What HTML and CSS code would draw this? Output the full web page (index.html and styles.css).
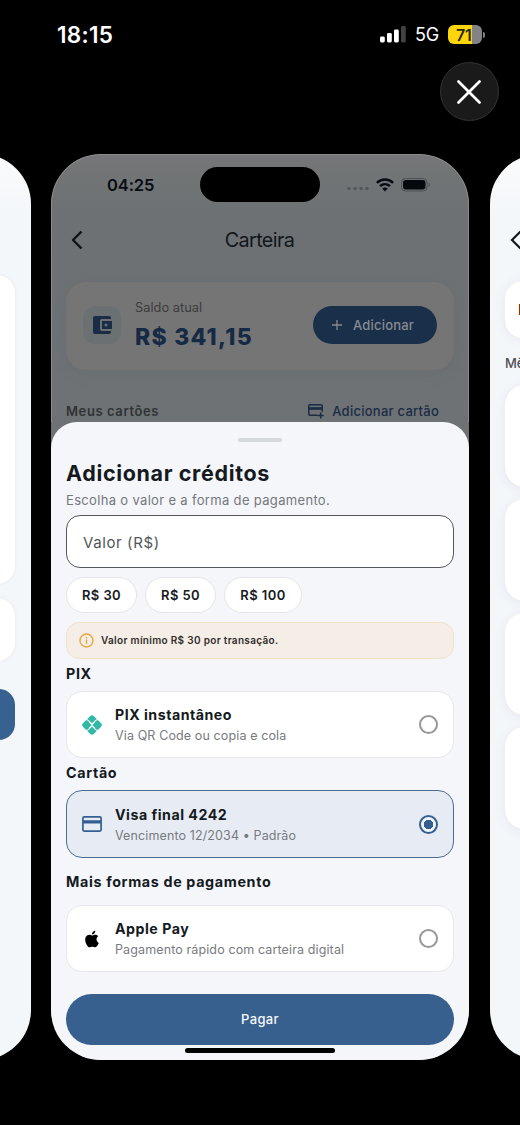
FILE: index.html
```html
<!DOCTYPE html>
<html lang="pt-BR">
<head>
<meta charset="utf-8">
<title>Carteira</title>
<link rel="stylesheet" href="styles.css">
</head>
<body>
<header class="top">
  <div class="status">
    <span class="clock">18:15</span>
    <div class="status-right">
      <svg class="signal" width="27" height="17" viewBox="0 0 27 17"><rect x="0" y="10.500" width="4.800" height="6" rx="1.400" fill="#fff"/><rect x="7" y="7" width="4.800" height="9.500" rx="1.400" fill="#fff"/><rect x="14" y="3.500" width="4.800" height="13" rx="1.400" fill="#fff"/><rect x="21" y="0" width="4.800" height="16.500" rx="1.400" fill="#424242"/></svg>
      <span class="net">5G</span>
      <div class="battery"><span class="level">71</span></div><i class="nub"></i>
    </div>
  </div>
  <div class="close-row"><div class="close"><svg width="24" height="24" viewBox="0 0 24 24" fill="none" stroke="#fff" stroke-width="2.700" stroke-linecap="round"><path d="M1.500 1.500 22.500 22.500M22.500 1.500 1.500 22.500"/></svg></div></div>
</header>
<main class="carousel">
  <section class="phone prev">
    <div class="panel tall"></div>
    <div class="panel short"></div>
    <div class="panel action"></div>
  </section>

  <section class="phone current">
    <div class="dim">
      <div class="inner-status">
        <span class="inner-clock">04:25</span>
        <span class="island"></span>
        <div class="inner-icons">
          <svg width="22" height="5" viewBox="0 0 22 5" fill="#53585a"><circle cx="2" cy="2.500" r="1.700"/><circle cx="8" cy="2.500" r="1.700"/><circle cx="14" cy="2.500" r="1.700"/><circle cx="20" cy="2.500" r="1.700"/></svg>
          <svg class="wifi" width="18" height="14" viewBox="0 0 18 14" fill="none" stroke="#070c12" stroke-width="2.500"><path d="M.9 4.800C5.500.3 12.500.3 17.100 4.800M4 8.200c2.900-2.700 7.100-2.700 10 0"/><path d="M9 13.400 6.200 10.600c1.700-1.400 3.900-1.400 5.600 0z" fill="#070c12" stroke="none"/></svg>
          <svg class="cell" width="30" height="14" viewBox="0 0 30 14"><rect x=".5" y=".5" width="25.500" height="12.500" rx="4" fill="none" stroke="#4c5154"/><rect x="2" y="2" width="22.500" height="9.500" rx="2.700" fill="#05090d"/><path d="M27.500 4.500c1.700.5 1.700 4 0 4.500z" fill="#4c5154"/></svg>
        </div>
      </div>
      <div class="nav">
        <svg width="12" height="20" viewBox="0 0 12 20" fill="none" stroke="#0d1318" stroke-width="2.400" stroke-linejoin="round"><path d="M10.500 1.500 2 10l8.500 8.500"/></svg>
        <h1 class="nav-title">Carteira</h1>
      </div>
      <div class="balance">
        <div class="wallet"><svg width="24" height="24" viewBox="0 0 24 24" fill="#1a2c46"><path d="M21 18v1c0 1.100-.9 2-2 2H5c-1.110 0-2-.9-2-2V5c0-1.100.89-2 2-2h14c1.100 0 2 .9 2 2v1h-9c-1.110 0-2 .9-2 2v8c0 1.100.89 2 2 2h9zm-9-2h10V8H12v8zm4-2.500c-.83 0-1.500-.67-1.500-1.500s.67-1.500 1.500-1.500 1.500.67 1.500 1.500-.67 1.500-1.500 1.500z"/></svg></div>
        <div class="sum"><span class="sum-label">Saldo atual</span><span class="sum-value">R$ 341,15</span></div>
        <div class="add"><svg width="10" height="10" viewBox="0 0 10 10" stroke="#858b91" stroke-width="1.300"><path d="M5 0v10M0 5h10"/></svg><span>Adicionar</span></div>
      </div>
      <div class="cards-head">
        <span class="my-cards">Meus cartões</span>
        <div class="add-card"><svg width="17" height="15" viewBox="0 0 17 15" fill="none" stroke="#1a2c46" stroke-width="1.500"><path d="M9.500 11.300H1.800a1 1 0 0 1-1-1V1.800a1 1 0 0 1 1-1h11.400a1 1 0 0 1 1 1v6M12.700 8.500v6M9.700 11.500h6"/><path d="M.8 4.500h13.400" stroke-width="2.600"/></svg><span>Adicionar cartão</span></div>
      </div>
    </div>

    <div class="sheet">
      <i class="handle"></i>
      <h2 class="title">Adicionar créditos</h2>
      <p class="caption">Escolha o valor e a forma de pagamento.</p>
      <div class="field">Valor (R$)</div>
      <div class="chips"><span class="chip">R$ 30</span><span class="chip">R$ 50</span><span class="chip wide">R$ 100</span></div>
      <div class="notice"><svg width="15" height="15" viewBox="0 0 15 15" fill="none" stroke="#e6a83c" stroke-width="1.400"><circle cx="7.500" cy="7.500" r="6.500"/><path d="M7.500 6.600v4.200M7.500 3.900v1.500"/></svg><span>Valor mínimo R$ 30 por transação.</span></div>
      <h3 class="label pix-label">PIX</h3>
      <div class="option">
        <svg class="opt-icon" width="20" height="20" viewBox="0 0 20 20" fill="#31b8a6"><path d="M5 4.200 8.300.9q1.700-1.500 3.400 0L15 4.200q-1 .1-1.700.8L10.600 7.700q-.6.600-1.200 0L6.700 5Q6 4.300 5 4.200z"/><path d="M5 15.800 8.300 19.100q1.700 1.500 3.400 0L15 15.800q-1-.1-1.700-.8l-2.700-2.700q-.6-.6-1.200 0L6.700 15q-.7.700-1.700.8z"/><path d="M3.900 5.300h1q.6 0 1 .5l2.700 2.700q1.400 1.200 2.800 0l2.700-2.700q.4-.5 1-.5h1l3 3q1.500 1.700 0 3.400l-3 3h-1q-.6 0-1-.5l-2.700-2.700q-1.400-1.200-2.800 0l-2.700 2.700q-.4.500-1 .5h-1l-3-3q-1.500-1.700 0-3.400z"/><path d="M7.200 7.200 12.800 12.800M12.800 7.200 7.200 12.800" stroke="#fff" stroke-width=".8"/></svg>
        <div class="opt-text"><strong>PIX instantâneo</strong><span>Via QR Code ou copia e cola</span></div>
        <i class="radio"></i>
      </div>
      <h3 class="label card-label">Cartão</h3>
      <div class="option selected">
        <svg class="opt-icon" width="20" height="16" viewBox="0 0 20 16" fill="none" stroke="#365f91" stroke-width="1.700"><rect x=".9" y=".9" width="18.200" height="14.200" rx="1.300"/><path d="M1 5.900h18" stroke-width="3.200"/></svg>
        <div class="opt-text"><strong>Visa final 4242</strong><span>Vencimento 12/2034 • Padrão</span></div>
        <i class="radio on"></i>
      </div>
      <h3 class="label more-label">Mais formas de pagamento</h3>
      <div class="option">
        <svg class="opt-icon" width="20" height="20" viewBox="0 0 24 24" fill="#000"><path d="M18.710 19.500c-.83 1.240-1.710 2.450-3.050 2.470-1.340.03-1.770-.79-3.290-.79-1.530 0-2 .77-3.270.82-1.310.05-2.300-1.320-3.140-2.530C4.250 17 2.940 12.450 4.700 9.390c.87-1.520 2.430-2.480 4.120-2.510 1.280-.02 2.500.87 3.290.87.780 0 2.260-1.070 3.810-.91.650.03 2.470.26 3.640 1.980-.09.06-2.170 1.280-2.150 3.810.03 3.020 2.650 4.030 2.680 4.040-.03.070-.42 1.440-1.380 2.830M13 3.500c.73-.83 1.940-1.460 2.940-1.500.13 1.170-.34 2.350-1.040 3.190-.69.850-1.830 1.510-2.950 1.420-.15-1.150.41-2.350 1.050-3.110z"/></svg>
        <div class="opt-text"><strong>Apple Pay</strong><span>Pagamento rápido com carteira digital</span></div>
        <i class="radio"></i>
      </div>
      <div class="pay">Pagar</div>
      <i class="home"></i>
    </div>
  </section>

  <section class="phone next">
    <div class="next-nav"><svg width="12" height="20" viewBox="0 0 12 20" fill="none" stroke="#15191c" stroke-width="2.200"><path d="M10.500 1.500 2 10l8.500 8.500"/></svg></div>
    <div class="filter">P</div>
    <div class="month">Mês</div>
    <div class="entries"><i></i><i></i><i></i><i></i></div>
  </section>
</main>
</body>
</html>
```
FILE: styles.css
```css
* { box-sizing: border-box; }
html { overflow: hidden; background: #000; }
body { margin: 0; width: 520px; height: 1125px; overflow: hidden; background: #000; font-family: Inter, "Liberation Sans", sans-serif; white-space: nowrap; }
h1, h2, h3, p { margin: 0; }
i, svg { display: block; flex: none; }

.top { height: 154px; }
.status { height: 62px; padding: 7px 35px 0 57px; display: flex; justify-content: space-between; align-items: center; color: #fff; }
.clock { font-size: 22.500px; font-weight: 600; letter-spacing: .3px; }
.status-right { display: flex; align-items: center; }
.net { font-size: 18px; margin-left: 8px; width: 33px; letter-spacing: -.2px; }
.battery { width: 34px; height: 19px; border-radius: 6px; background: linear-gradient(90deg, #ffd60a 24px, #838387 24px); display: flex; align-items: center; padding-left: 8px; }
.level { color: #2b2610; font-size: 16px; font-weight: 600; letter-spacing: -.2px; }
.nub { width: 2px; height: 6px; margin-left: 1px; border-radius: 0 2px 2px 0; background: #838387; }
.close-row { display: flex; justify-content: flex-end; padding: 0 21px 0 0; }
.close { width: 59px; height: 59px; border-radius: 50%; background: #1a1a1a; border: 1px solid #333; display: grid; place-items: center; padding-right: 1px; }

.carousel { display: flex; width: 1300px; margin-left: -387px; gap: 20px; }
.phone { flex: none; width: 418px; height: 906px; border-radius: 50px; overflow: hidden; background: #f4f7fa; }

.prev { padding: 121px 16px 0; background: linear-gradient(#fafbfc, #f4f7fa 60px); }
.panel { background: #fff; border-radius: 18px; box-shadow: 0 0 3px #dfe3e8; }
.tall { height: 309px; }
.short { height: 63px; margin-top: 14px; }
.action { height: 51px; margin-top: 28px; background: #376190; border-radius: 16px; box-shadow: none; }

.current { background: #6e7275; }
.dim { height: 268px; background: linear-gradient(#747677, #6d7173 60px, #6e7274); border: 1px solid #8a8c8d; border-bottom: 0; border-radius: 50px 50px 0 0; padding: 11px 14px 0; }
.inner-status { display: flex; align-items: center; height: 37px; padding-left: 41px; }
.inner-clock { width: 93px; font-size: 16.500px; font-weight: 600; color: #080d12; letter-spacing: -.1px; }
.island { width: 120px; height: 35px; border-radius: 18px; background: #000; }
.inner-icons { display: flex; align-items: center; margin-left: 27px; }
.inner-icons > svg:first-child { margin-top: 8px; }
.wifi { margin-left: 7px; }
.cell { margin-left: 7px; }
.nav { height: 42px; margin-top: 16px; display: flex; align-items: center; padding: 0 5px; }
.nav-title { flex: 1; text-align: center; padding-right: 13px; font-size: 19.800px; font-weight: 400; letter-spacing: -.6px; color: #11161b; }
.balance { height: 88px; margin-top: 21px; border-radius: 20px; background: #757575; box-shadow: 0 2px 12px #6a6d70; display: flex; align-items: center; padding: 0 17px 2px; }
.wallet { width: 38px; height: 38px; border-radius: 12px; background: #6b7173; display: grid; place-items: center; }
.sum { display: flex; flex-direction: column; margin-left: 14px; padding-top: 2px; width: 178px; }
.sum-label { font-size: 12.800px; line-height: 18px; margin-top: -1px; letter-spacing: .03px; color: #3b3c3e; }
.sum-value { font-size: 23px; line-height: 29px; margin-top: 6px; font-weight: 800; letter-spacing: 1.250px; color: #172a45; }
.add { width: 124px; height: 38px; border-radius: 19px; background: #1a2f49; color: #858b91; display: flex; align-items: center; padding-left: 19px; gap: 11px; font-size: 13px; font-weight: 500; letter-spacing: .2px; }
.cards-head { display: flex; justify-content: space-between; align-items: center; height: 20px; margin-top: 31px; padding-right: 15px; font-size: 13px; font-weight: 500; letter-spacing: .25px; color: #1a2c46; }
.my-cards { font-weight: 600; letter-spacing: .6px; color: #303336; }
.add-card { display: flex; align-items: center; gap: 7px; }

.sheet { height: 638px; background: #f4f6fa; border-radius: 26px 26px 0 0; padding: 16px 15px 0; color: #151a1e; }
.handle { width: 44px; height: 4px; border-radius: 2px; margin: 0 auto; background: #d6d9dc; }
.title { margin-top: 17px; font-size: 21.500px; line-height: 28px; font-weight: 700; letter-spacing: .65px; }
.caption { margin-top: 3px; font-size: 13px; line-height: 20px; letter-spacing: .33px; color: #74777b; }
.field { height: 53px; margin-top: 5px; border: 1px solid #53585c; border-radius: 14px; background: #fff; line-height: 53px; padding-left: 16px; font-size: 15px; letter-spacing: .6px; color: #535659; }
.chips { display: flex; gap: 8px; margin-top: 9px; }
.chip { width: 71px; height: 36px; border: 1px solid #e2e5e9; border-radius: 18px; background: #fff; text-align: center; line-height: 34px; font-size: 13px; font-weight: 600; letter-spacing: .4px; }
.wide { width: 78px; }
.notice { height: 37px; margin-top: 9px; border: 1px solid #f2e2c9; border-radius: 13px; background: #f5eee7; display: flex; align-items: center; gap: 7px; padding: 0 0 1px 12px; font-size: 10px; font-weight: 600; letter-spacing: .32px; color: #302d2b; }
.label { font-size: 14.300px; line-height: 20px; font-weight: 700; letter-spacing: .65px; }
.pix-label, .card-label { margin: 5px 0 7px; }
.more-label { margin: 14px 0 13px; }
.option { height: 67px; border: 1px solid #e6e7ec; border-radius: 16px; background: #fff; display: flex; align-items: center; padding: 0 15px; }
.selected { height: 68px; border-color: #4e6b91; background: #e7ecf4; }
.opt-text { flex: 1; display: flex; flex-direction: column; margin-left: 13px; padding-top: 2px; }
.opt-text strong { font-size: 14.200px; line-height: 20px; font-weight: 650; letter-spacing: .5px; }
.opt-text span { font-size: 12.500px; line-height: 20px; letter-spacing: .12px; margin-top: 1px; color: #777a7e; }
.radio { width: 19px; height: 19px; border: 2px solid #96989a; border-radius: 50%; }
.on { border-color: #365f91; background: radial-gradient(circle, #365f91 4.500px, #f0f7fc 5px); }
.pay { height: 51px; margin-top: 22px; border-radius: 26px; background: #37608f; color: #f5f8fb; text-align: center; line-height: 51px; font-size: 13px; font-weight: 500; letter-spacing: .35px; }
.home { width: 150px; height: 5px; border-radius: 3px; background: #000; margin: 3px auto 0; }

.next { margin-left: 1px; padding: 76px 15px 0; background: linear-gradient(#fafbfc, #f4f7fa 60px); }
.next-nav { height: 22px; padding-left: 5px; }
.filter { height: 57px; margin-top: 29px; padding-left: 13px; border-radius: 18px; background: #fff; box-shadow: 0 1px 12px #e3e5eb; line-height: 57px; font-size: 14px; }
.month { height: 20px; margin-top: 15px; line-height: 20px; font-size: 13px; font-weight: 500; color: #4c5053; letter-spacing: 0; }
.entries { display: grid; gap: 12px; margin-top: 12px; }
.entries i { height: 102px; border-radius: 20px; background: #fff; box-shadow: 0 2px 12px #e3e5eb; }
```
